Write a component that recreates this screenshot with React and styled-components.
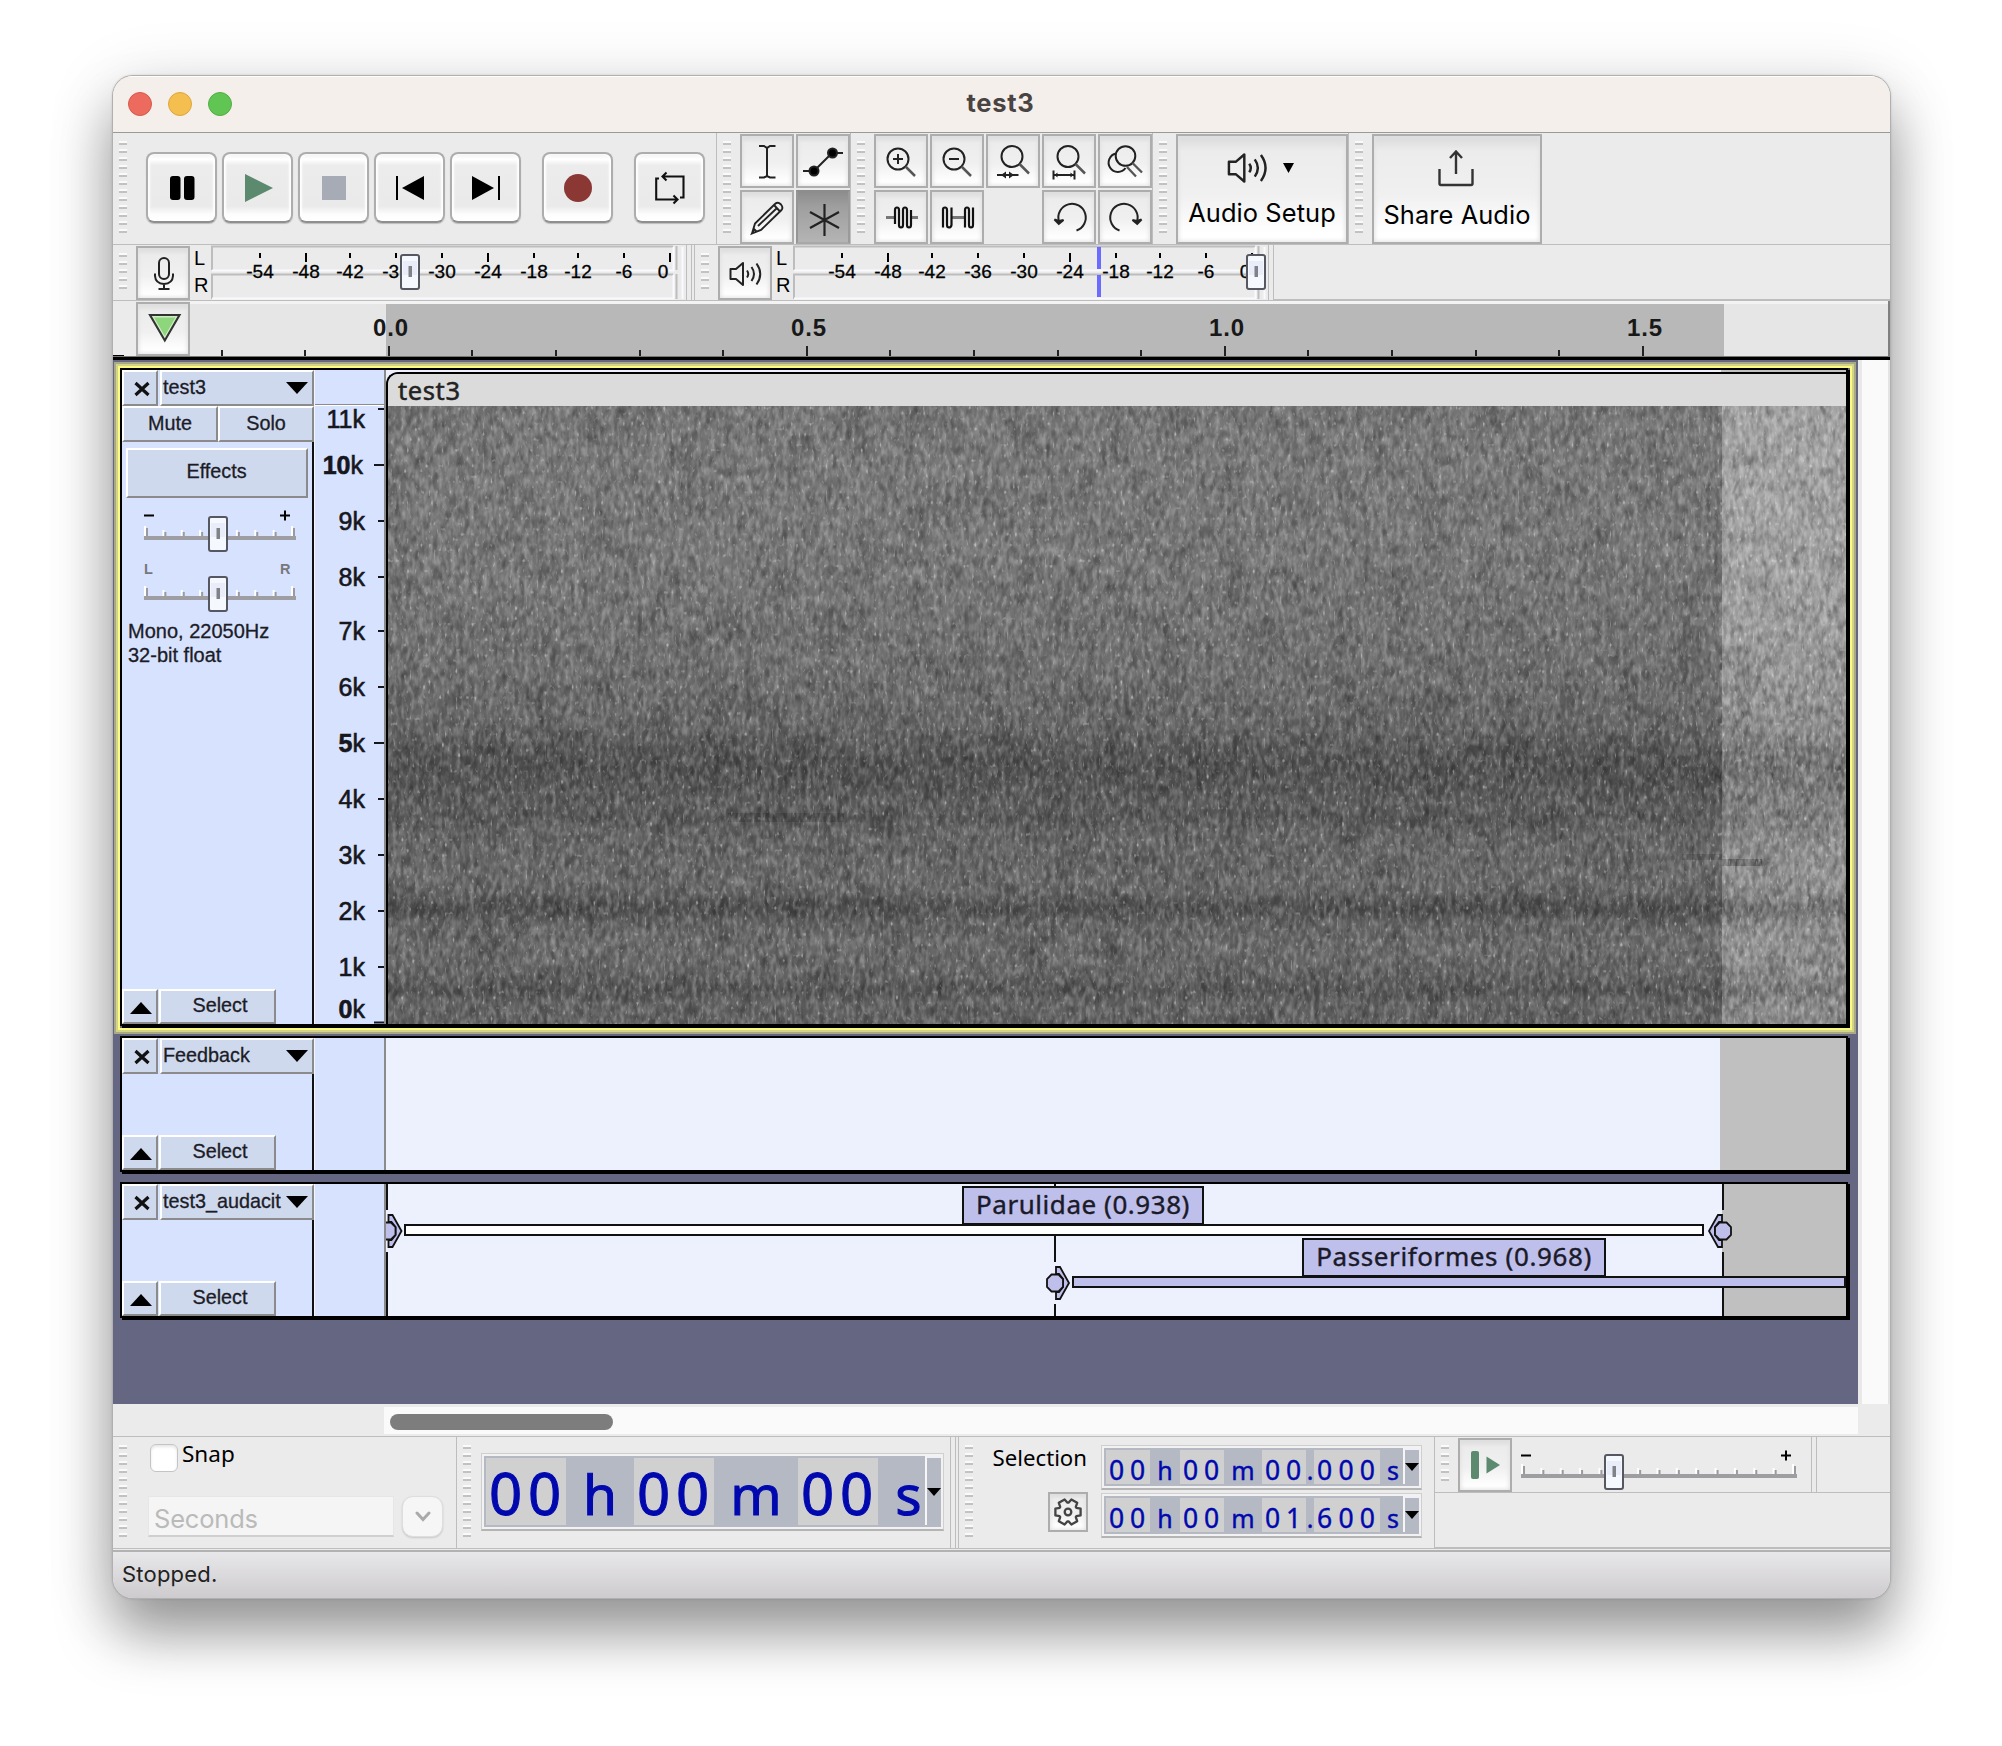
import React from "react";
import styled, { createGlobalStyle, css } from "styled-components";

const lucida = `"Noto Sans", "Open Sans", sans-serif`;
const system = `Inter, Roboto, sans-serif`;
const helvetica = `"Liberation Sans", Arial, sans-serif`;

const Global = createGlobalStyle`
  * { box-sizing: border-box; }
  html, body { margin: 0; background: #fff; }
  svg { display: block; flex: none; }
`;

const Desktop = styled.main`
  width: 2002px;
  height: 1746px;
  padding: 76px 112px 0 113px;
  overflow: hidden;
  background: #fff;
  font-family: ${helvetica};
  color: #000;
`;

const AppWindow = styled.section`
  display: flex;
  flex-direction: column;
  width: 1777px;
  height: 1522px;
  overflow: hidden;
  border-radius: 20px;
  background: #ebebeb;
  box-shadow: 0 0 0 1px #b0b0b0, 0 0 3px rgba(0, 0, 0, 0.3), 0 36px 56px rgba(0, 0, 0, 0.36), 0 10px 70px rgba(0, 0, 0, 0.14);
`;

const TitleBar = styled.header`
  display: grid;
  grid-template-columns: 200px 1fr 200px;
  align-items: center;
  height: 57px;
  padding: 0 15px;
  background: #f5efec;
  border-bottom: 1px solid #999;
  box-shadow: inset 0 1px 0 #fff;
`;

const Lights = styled.div`
  display: flex;
  gap: 16px;
`;

const Light = styled.span`
  width: 24px;
  height: 24px;
  border-radius: 50%;
  background: ${(p) => p.$color};
  border: 1px solid ${(p) => p.$edge};
`;

const Title = styled.h1`
  margin: 0;
  padding: 0 2px 4px 0;
  text-align: center;
  font: 700 25.5px ${system};
  letter-spacing: 0.7px;
  color: #494341;
`;

const Row = styled.div`
  display: flex;
  flex: none;
  height: ${(p) => p.$h}px;
  border-bottom: 1px solid #bdbdbd;
`;

const Toolbar = styled.div`
  display: flex;
  align-items: flex-start;
  padding-left: 6px;
  width: ${(p) => (p.$w ? p.$w + "px" : "auto")};
  border-right: ${(p) => (p.$open ? "none" : "1px solid #bdbdbd")};
`;

const Grip = styled.span`
  flex: none;
  width: 8px;
  height: ${(p) => p.$n * 8 - 4}px;
  margin: 8px ${(p) => p.$gap ?? 9}px 0 0;
  background: repeating-linear-gradient(#fafafa 0 2px, #c2c2c2 2px 4px, transparent 4px 8px);
`;

const TransportKeys = styled.div`
  display: flex;
  gap: 5px;
  padding: 19px 10px 0 0;
`;

const BigKey = styled.button`
  display: grid;
  place-items: center;
  width: 71px;
  height: 71px;
  padding: 0;
  margin-left: ${(p) => p.$push || 0}px;
  border: 2px solid #adadad;
  border-bottom-color: #8f8f8f;
  border-radius: 8px;
  background: linear-gradient(#f2f2f2 0, #fff 8%, #ececec 17%, #eaeaea 78%, #fdfdfd 90%, #fff 100%);
  box-shadow: inset 2px 0 2px #fff, inset -2px 0 2px #fff, 0 1px 1px rgba(0, 0, 0, 0.2);
`;

const KeyGrid = styled.div`
  display: grid;
  grid-template-columns: repeat(${(p) => p.$cols}, 54px);
  grid-auto-rows: 54px;
  gap: 2px;
  padding-top: 1px;
`;

const bevel = css`
  border: 2px solid #adadad;
  background: linear-gradient(#d9d9d9 0, #ececec 14%, #f0f0f0 55%, #fff 92%);
  box-shadow: inset 0 0 4px 1px #e2e2e2;
`;

const Key = styled.button`
  display: grid;
  place-items: center;
  flex: none;
  width: 54px;
  height: 54px;
  padding: 0;
  margin-top: ${(p) => p.$top || 0}px;
  ${bevel}
  ${(p) => p.$down && css`
    border-color: #8d8d8d #9a9a9a #a8a8a8 #959595;
    background: linear-gradient(#8d8d8d, #9f9f9f 30%, #b4b4b4);
    box-shadow: none;
  `}
  svg { overflow: visible; }
`;

const WideKey = styled.button`
  display: flex;
  flex-direction: column;
  align-items: center;
  width: ${(p) => p.$w}px;
  height: 110px;
  margin-top: 1px;
  padding: ${(p) => p.$top}px 0 0;
  gap: ${(p) => p.$gap}px;
  ${bevel}
  font: 400 25.4px/30px ${system};
  letter-spacing: 0.1px;
  white-space: nowrap;
  color: #000;
`;

const IconLine = styled.span`
  display: flex;
  align-items: center;
  gap: 14px;
  padding-right: 4px;
`;

const ChannelNames = styled.div`
  display: flex;
  flex-direction: column;
  width: 17px;
  margin-left: 4px;
  font-size: 20px;
  line-height: 27px;
`;

const Resizer = styled.span`
  width: 6px;
  height: ${(p) => p.$h || 55}px;
  margin-left: 2px;
  border: solid #bdbdbd;
  border-width: 0 1px;
`;

const MeterRest = styled.div`
  flex: 1;
  border-bottom: 1px solid #bdbdbd;
`;

const TimelineRow = styled.div`
  display: flex;
  flex: none;
  height: 59px;
  padding-left: 23px;
  background: linear-gradient(#000, #000) 0 54px / 11px 1px no-repeat, linear-gradient(transparent 55px, #777 55px, #777 56px, #000 56px), #ebebeb;
`;

const Workspace = styled.div`
  display: flex;
  flex: none;
  height: 1044px;
`;

const TrackList = styled.div`
  display: flex;
  flex-direction: column;
  gap: 8px;
  width: 1745px;
  padding: 8px 8px 0 7px;
  background: #646682;
`;

const VScroll = styled.div`
  flex: 1;
  background: #fafafa;
  border-left: 4px solid #e9e9e9;
  border-right: 2px solid #e4e4e4;
`;

const TrackShell = styled.div`
  width: 1730px;
  height: ${(p) => p.$h + 2}px;
  padding: 0 2px 2px 0;
  ${(p) => p.$focus && css`
    box-shadow: 0 0 0 2px #fbfb82, 0 0 0 4px #d3d38a, 0 0 0 6px #a9aa84;
  `}
`;

const TrackBox = styled.article`
  display: flex;
  height: 100%;
  border: 2px solid #000;
  box-shadow: 2px 2px 0 #000;
  background: #d7e2ff;
`;

const Panel = styled.div`
  display: flex;
  flex-direction: column;
  flex: none;
  width: 192px;
`;

const PanelBody = styled.div`
  display: flex;
  flex-direction: column;
  flex: 1;
  border-right: 2px solid #111;
`;

const Split = styled.div`
  display: flex;
  flex: none;
  gap: ${(p) => p.$gap || 0}px;
  height: 36px;
`;

const PanelKey = styled.button`
  display: flex;
  align-items: center;
  justify-content: ${(p) => (p.$left ? "space-between" : "center")};
  width: ${(p) => p.$w}px;
  height: ${(p) => p.$h || 36}px;
  margin: ${(p) => p.$m || 0};
  padding: ${(p) => p.$pad || "0"};
  border: 2px solid;
  border-color: #fff #8b8b8b #8b8b8b #fff;
  background: #cfd9ee;
  font: 400 19.8px/22px ${helvetica};
  -webkit-text-stroke: 0.3px #1c1c26;
  color: #1c1c26;
  white-space: nowrap;
`;

const NameText = styled.span`
  padding-bottom: ${(p) => p.$lift ?? 3}px;
`;

const SliderBlock = styled.div`
  margin: ${(p) => p.$m};
  svg { overflow: visible; }
`;

const TrackInfo = styled.p`
  margin: 7px 0 0 6px;
  font-size: 20px;
  line-height: 24px;
  -webkit-text-stroke: 0.3px #1c1c26;
  color: #1c1c26;
`;

const PanelFoot = styled.div`
  display: flex;
  margin-top: auto;
`;

const VRuler = styled.div`
  flex: none;
  width: 72px;
  border-left: 1px solid #f4f6ff;
  border-right: 2px solid #8b8b8b;
`;

const Lane = styled.div`
  position: relative;
  width: 1460px;
  background: linear-gradient(90deg, #edf1fe ${(p) => p.$cut}px, #c0c0c0 ${(p) => p.$cut}px);
`;

const Clip = styled.div`
  margin-top: 2px;
  border: solid #000;
  border-width: 2px 0 0 2px;
  border-top-left-radius: 12px;
  overflow: hidden;
`;

const ClipHeader = styled.div`
  height: 32px;
  padding-left: 10px;
  background: #dbdbdb;
  font: 400 25.5px/32px ${lucida};
  letter-spacing: 0.6px;
  -webkit-text-stroke: 0.5px #222;
  color: #222;
`;

const LabelTag = styled.span`
  position: absolute;
  left: ${(p) => p.$x}px;
  top: ${(p) => p.$y}px;
  width: ${(p) => p.$w}px;
  height: 39px;
  border: 2px solid #111;
  background: #bfbfec;
  text-align: center;
  font: 400 26px/32px ${lucida};
  letter-spacing: ${(p) => p.$ls}px;
  -webkit-text-stroke: 0.4px #1a1a28;
  white-space: nowrap;
  color: #1a1a28;
`;

const HScrollRow = styled.div`
  flex: none;
  height: 33px;
  padding: 3px 32px 2px 271px;
  background: #ebebeb;
  border-bottom: 1px solid #bdbdbd;
`;

const HScroll = styled.div`
  height: 27px;
  padding: 7px 6px;
  background: #fafafa;
`;

const HThumb = styled.div`
  width: 223px;
  height: 16px;
  border-radius: 8px;
  background: #7d7d7d;
`;

const SnapBox = styled.div`
  display: flex;
  flex-direction: column;
  gap: 20px;
  padding: 7px 0 0 21px;
`;

const SnapCheck = styled.label`
  display: flex;
  gap: 4px;
  padding-left: 2px;
  height: 32px;
  font: 400 22.5px/19px ${lucida};
`;

const Check = styled.span`
  width: 28px;
  height: 28px;
  border: 1px solid #c4c4c4;
  border-radius: 6px;
  background: #fff;
  box-shadow: inset 0 2px 3px rgba(0, 0, 0, 0.1);
`;

const Combo = styled.div`
  display: flex;
  gap: 8px;
`;

const ComboField = styled.div`
  width: 246px;
  height: 41px;
  padding-left: 5px;
  background: #f5f5f5;
  border: 1px solid #e6e6e6;
  border-bottom: 2px solid #cfcfcf;
  font: 400 25.5px/44px ${system};
  letter-spacing: -0.2px;
  color: #bababa;
`;

const ComboKey = styled.span`
  display: grid;
  place-items: center;
  width: 41px;
  height: 41px;
  border-radius: 11px;
  border: 1px solid #dedede;
  background: #f6f6f6;
  box-shadow: 0 1px 2px rgba(0, 0, 0, 0.15);
`;

const TimeFrame = styled.div`
  display: flex;
  width: ${(p) => p.$w}px;
  height: ${(p) => p.$h}px;
  padding: 2px;
  border: 1px solid #cfcfcf;
  border-bottom: 2px solid #b4b4b4;
  background: #f2f2f2;
`;

const TimeInner = styled.div`
  display: flex;
  flex: 1;
  padding: 2px 0 2px 2px;
  background: #b5b9c4;
  font-family: ${lucida};
  -webkit-text-stroke: ${(p) => p.$stroke}px #0008ae;
  color: #0008ae;
`;

const Digits = styled.span`
  display: grid;
  grid-template-columns: repeat(${(p) => p.$n}, 1fr);
  width: ${(p) => p.$w}px;
  padding-right: 2px;
  background: #d0d0d0;
  text-align: center;
  font-size: ${(p) => p.$size}px;
  line-height: ${(p) => p.$lh}px;
`;

const Digit = styled.span`
  height: 0;
`;

const Unit = styled.span`
  flex: none;
  width: ${(p) => p.$w}px;
  height: 0;
  padding-left: ${(p) => p.$pad || 0}px;
  text-align: center;
  font-size: ${(p) => p.$size}px;
  line-height: ${(p) => p.$lh}px;
`;

const DropKey = styled.span`
  display: grid;
  place-items: center;
  flex: none;
  width: 16px;
  margin-top: -2px;
  margin-left: auto;
  border-left: 2px solid #f6f6f6;
  border-top: 2px solid #f0f0f6;
`;

const TimeWrap = styled.div`
  padding: 16px 4px 0 10px;
`;

const SelectionLead = styled.div`
  display: flex;
  flex-direction: column;
  align-items: flex-end;
  width: 97px;
  margin-right: 13px;
  padding-top: 8px;
  gap: 21px;
  font: 400 22.2px/26px ${lucida};
`;

const SelectionWord = styled.span`
  margin-right: 1px;
`;

const GearKey = styled.button`
  display: grid;
  place-items: center;
  width: 40px;
  height: 40px;
  padding: 0;
  ${bevel}
`;

const TimeStack = styled.div`
  display: flex;
  flex-direction: column;
  gap: 3px;
  padding-top: 8px;
`;

const SpeedArea = styled.div`
  flex: 1;
  height: 111px;
  border-bottom: 1px solid #bdbdbd;
`;

const SpeedBar = styled.div`
  display: flex;
  height: 56px;
  padding-left: 6px;
  border-bottom: 1px solid #bdbdbd;
`;

const StatusBar = styled.footer`
  flex: 1;
  margin-top: 1px;
  padding: 7px 0 0 9px;
  border-top: 2px solid #b2b2b2;
  background: linear-gradient(#e8e7e9, #cdcbce);
  font: 400 22px/30px ${system};
  letter-spacing: 0.2px;
  color: #222;
`;

/* ---------- icons ---------- */

const Pause = () => (
  <svg width="26" height="26"><rect x="1" y="1" width="10.5" height="24" rx="3" /><rect x="15" y="1" width="10.5" height="24" rx="3" /></svg>
);
const Play = () => (
  <svg width="30" height="30"><path d="M2 1L30 15L2 29Z" fill="#5b8a6f" /></svg>
);
const Stop = () => (
  <svg width="26" height="26"><rect x="1" y="1" width="24" height="24" fill="#a7abb5" /></svg>
);
const Prev = () => (
  <svg width="30" height="26"><rect x="1" y="1" width="2" height="24" /><path d="M29 1V25L7 13Z" /></svg>
);
const Next = () => (
  <svg width="30" height="26"><rect x="27" y="1" width="2" height="24" /><path d="M1 1V25L23 13Z" /></svg>
);
const Rec = () => (
  <svg width="30" height="30"><circle cx="15" cy="15" r="14" fill="#8b3835" /></svg>
);
const Loop = () => (
  <svg width="32" height="34" fill="none" stroke="#111" strokeWidth="2.1">
    <path d="M9 5.5H29.500V26.500H26M12.500 1.500L8.500 5.500L12.500 9.500M5 7.500H2.200V28.500H23M19.500 24.500L23.500 28.500L19.500 32.500" />
  </svg>
);

const stroke = { fill: "none", stroke: "#222", strokeWidth: 2 };

const Glyph = ({ dx = 0, dy = 0, children }) => (
  <svg width="40" height="40" viewBox={`${-dx} ${-dy} 40 40`} {...stroke}>{children}</svg>
);

const IBeam = () => (
  <Glyph dy={1}><path d="M20 4.500V35M12 4H17L20 6L23 4H28.500M12 35.500H17L20 34L23 35.500H28.500" /></Glyph>
);
const Envelope = () => (
  <Glyph dx={-1} dy={1}>
    <path d="M1 29H12L30 11H41" fill="none" />
    <circle cx="12" cy="29" r="4.500" fill="#000" /><circle cx="30.500" cy="11" r="4.500" fill="#000" />
  </Glyph>
);
const Pencil = () => (
  <Glyph dy={1}>
    <path d="M5 35.500L8 25.500L28.500 5.500Q31 3.500 34 6.500Q36.500 9.500 34.500 12L14 32Z M27 7L33 13.500M11 28L30 10M5 35.500L7 31L9.500 33.500Z" strokeWidth="1.900" />
  </Glyph>
);
const Star = () => (
  <Glyph dx={1} dy={2}><path d="M20.500 5V37M6 13L35 29M35 13L6 29" strokeWidth="2.200" /></Glyph>
);
const ZoomIn = () => (
  <Glyph dx={2} dy={3}><circle cx="15" cy="15" r="10.500" /><path d="M10 15H20M15 10V20" /><path d="M22.500 22.500L32 32" stroke="#555" strokeWidth="2.500" /></Glyph>
);
const ZoomOut = () => (
  <Glyph dx={2} dy={3}><circle cx="15" cy="15" r="10.500" /><path d="M10 15H20" /><path d="M22.500 22.500L32 32" stroke="#555" strokeWidth="2.500" /></Glyph>
);
const ZoomSel = () => (
  <Glyph dx={2} dy={2}>
    <circle cx="17" cy="13.500" r="10.500" /><path d="M24.500 21L34 30.500" stroke="#555" strokeWidth="2.500" />
    <path d="M2 32H23.500" /><path d="M11 28.500V35.500L6 32ZM14 28.500V35.500L19 32Z" fill="#222" stroke="none" />
  </Glyph>
);
const ZoomFit = () => (
  <Glyph dx={2} dy={2}>
    <circle cx="17" cy="13.500" r="10.500" /><path d="M24.500 21L34 30.500" stroke="#555" strokeWidth="2.500" />
    <path d="M2.500 32H23.500M2.500 27.500V36.500M23.500 27.500V36.500" /><path d="M6.500 29.500V34.500L3.500 32ZM19.500 29.500V34.500L22.500 32Z" fill="#222" stroke="none" />
  </Glyph>
);
const ZoomToggle = () => (
  <Glyph dx={2} dy={2}>
    <circle cx="18.500" cy="13" r="9.800" /><path d="M25.500 20L35 29.500M20 24L29 33.500" stroke="#555" strokeWidth="2.300" />
    <path d="M9 10.500A9.300 9.300 0 1 0 18.500 25" />
  </Glyph>
);
const Trim = () => (
  <Glyph>
    <path d="M5 20.500H13M31 20.500H37" stroke="#777" strokeWidth="3" />
    <path d="M14 27V13Q14 10.500 16 10.500T18 13V28Q18 30.500 20 30.500T22 28V13Q22 10.500 24 10.500T26 13V28Q26 30.500 28 30.500T30 28V13" stroke="#111" strokeWidth="2.200" />
  </Glyph>
);
const Silence = () => (
  <Glyph>
    <path d="M15 20.500H28" stroke="#777" strokeWidth="3" />
    <path d="M6 30.500V12.500Q6 10.500 8 10.500T10 13V28Q10 30.500 12 30.500T14.500 28V10.500M28 30.500V13Q28 10.500 30 10.500T32 13V28Q32 30.500 34 30.500T36 28V10.500" stroke="#111" strokeWidth="2.200" />
  </Glyph>
);
const Undo = () => (
  <Glyph><path d="M27.500 33.500A13.700 13.700 0 1 0 9.800 24" /><path d="M5.500 22.500L9.800 27L14.500 23L10 24Z" fill="#222" strokeWidth="2" /></Glyph>
);
const Redo = () => (
  <Glyph><path d="M14.500 33.500A13.700 13.700 0 1 1 32.200 24" /><path d="M36.500 22.500L32.200 27L27.500 23L32 24Z" fill="#222" strokeWidth="2" /></Glyph>
);
const Mic = () => (
  <svg width="24" height="36" viewBox="-1 -1 24 36" {...stroke}>
    <rect x="7" y="2" width="10" height="21" rx="5" /><path d="M3 17.500V20Q3.500 27.500 12 28Q20.500 27.500 21 20V17.500M12 28V32M6.500 33H17.500" />
  </svg>
);
const Speaker = ({ w = 34, h = 26, dx = 1 }) => (
  <svg width={w} height={h} viewBox={`${-dx} ${-dx} 34 26`} {...stroke}>
    <path d="M1.500 8H7L14 2V24L7 18H1.500Z" strokeLinejoin="round" />
    <path d="M18 9.500Q20.500 13 18 16.500M22.500 6Q27.500 13 22.500 20M27.500 2.500Q35 13 27.500 23.500" />
  </svg>
);
const Share = () => (
  <svg width="38" height="38" viewBox="1 0 38 38" fill="none" stroke="#333" strokeWidth="2.400">
    <path d="M2.500 20V34.500Q2.500 36 4 36H34Q35.500 36 35.500 34.500V20M19 25V3M13 9L19 2.500L25 9" />
  </svg>
);
const Down = ({ w = 14, h = 8 }) => (
  <svg width={w} height={h}><path d={`M0 0H${w}L${w / 2} ${h}Z`} /></svg>
);
const Up = () => (
  <svg width="22" height="12"><path d="M0 12H22L11 0Z" /></svg>
);
const Cross = () => (
  <svg width="18" height="16" stroke="#111" strokeWidth="3.200"><path d="M2.500 2L15.500 14M15.500 2L2.500 14" /></svg>
);

const gearPath = Array.from({ length: 6 }, (_, i) =>
  [[-27, 9.3], [-15, 13], [15, 13], [27, 9.3]].map(([a, r]) => {
    const t = ((i * 60 + a) * Math.PI) / 180;
    return `${(15 + r * Math.cos(t)).toFixed(1)} ${(15 + r * Math.sin(t)).toFixed(1)}`;
  }).join("L")
).join("L");

const Gear = () => (
  <svg width="30" height="30" viewBox="0 0 30 30" fill="none" stroke="#444" strokeWidth="2.300" strokeLinejoin="round">
    <circle cx="15" cy="15" r="3.300" />
    <path d={`M${gearPath}Z`} />
  </svg>
);
const GreenPin = () => (
  <svg width="34" height="30" viewBox="-1 1 34 30"><path d="M4.500 3H31L17.800 26Z" fill="#8ed67c" stroke="#cdeec3" strokeWidth="3" /><path d="M3 2H32.500L17.800 27.500Z" fill="none" stroke="#333" strokeWidth="2.100" /></svg>
);
const PlaySpeed = () => (
  <svg width="32" height="30" fill="#5b8a6f"><rect x="2" y="1" width="8" height="28" rx="2" /><path d="M17.500 6.500L31 15L17.500 23.500Z" /></svg>
);

const Thumb = ({ x, y }) => (
  <g>
    <rect x={x + 1} y={y + 1} width="18" height="34" rx="2" fill="#f6f8ff" stroke="#555761" strokeWidth="2" />
    <rect x={x + 3} y={y + 7} width="14" height="14" fill="#e9edfa" />
    <rect x={x + 8.500} y={y + 12} width="3.500" height="11" fill="#808288" />
  </g>
);

const Slider = ({ width, marks, thumb, left, right, small, drop = 0 }) => {
  const step = (width - 5) / (marks - 1);
  return (
    <svg width={width} height="42">
      {small ? (
        <g fontFamily="Liberation Sans" fontSize="14.500" fontWeight="700" fill="#77777d">
          <text x="0" y="4">{left}</text><text x={width - 16} y="4">{right}</text>
        </g>
      ) : (
        <path d={`M0 5.500H10M${width - 16} 5.500h10M${width - 11} 0.500v10`} stroke="#000" strokeWidth="2" />
      )}
      <g transform={`translate(0 ${drop})`}>
        {Array.from({ length: marks }, (_, i) => {
          const end = i === 0 || i === marks - 1;
          const x = i * step;
          return (
            <g key={i}>
              <rect x={x} y={end ? 14 : 18} width="2" height={end ? 10 : 6} fill="#fff" />
              <rect x={x + 2} y={end ? 16 : 20} width="2" height={end ? 9 : 5} fill="#9a9aa0" />
            </g>
          );
        })}
        <rect x="0" y="24" width={width} height="4" fill="#9e9ea2" />
        <Thumb x={thumb} y={4} />
      </g>
    </svg>
  );
};

const meterTicks = [
  [49, "-54"], [95, "-48", 1], [139, "-42"], [185, "-36"], [231, "-30"],
  [277, "-24", 1], [323, "-18"], [367, "-12"], [413, "-6"], [459, "0", 1],
];

const Meter = ({ thumb, peak }) => (
  <svg width="473" height="55">
    <path d="M1 25V1.500H462M1 54V29.500H462M465.500 1V25M465.500 29V54" fill="none" stroke="#bdbdbd" strokeWidth="2" />
    <path d="M1 25.500H462.500V2M1 53.500H462.500V30M471.500 2V54" fill="none" stroke="#fafafe" strokeWidth="2" />
    {meterTicks.map(([x, t, long]) => (
      <g key={t}>
        <rect x={x - 1} y="8" width="2" height={long ? 9 : 5} />
        <text x={t === "0" ? 452 : x} y="32.500" textAnchor="middle" fontFamily="Liberation Sans" fontSize="19" stroke="#000" strokeWidth="0.300">{t}</text>
      </g>
    ))}
    {peak && <path d={`M${peak} 2V24M${peak} 30V52`} stroke="#6b6bff" strokeWidth="4" />}
    <Thumb x={thumb} y={9} />
  </svg>
);

const TimeRuler = () => (
  <svg width="1700" height="59">
    <rect width="1700" height="59" fill="#e6e6e6" />
    <rect width="1700" height="3" fill="#f3f3f3" />
    <rect x="196" y="3" width="1338" height="52" fill="#b8b8b8" />
    {Array.from({ length: 18 }, (_, i) => {
      const major = (i - 2) % 5 === 0;
      const x = 31.500 + i * 83.600;
      return <rect key={i} x={Math.round(x) - 1} y={major ? 45 : 49} width="2" height={major ? 10 : 6} fill="#222" />;
    })}
    {["0.0", "0.5", "1.0", "1.5"].map((t, i) => (
      <text key={t} x={201 + i * 418} y="34.500" textAnchor="middle" fontFamily="Liberation Sans" fontWeight="700" fontSize="24" letterSpacing="0.8" fill="#181818">{t}</text>
    ))}
    <rect y="55" width="1700" height="1" fill="#777" />
    <rect y="56" width="1700" height="3" fill="#000" />
    <rect x="1698" width="2" height="56" fill="#808080" />
  </svg>
);

const freqs = [
  ["11", 49, 39, 0], ["10", 95, 95, 1], ["9", 151, 151, 0], ["8", 207, 207, 0], ["7", 261, 261, 0], ["6", 317, 317, 0],
  ["5", 373, 373, 1], ["4", 429, 429, 0], ["3", 485, 485, 0], ["2", 541, 541, 0], ["1", 597, 597, 0], ["0", 639, 652.5, 1],
];

const FreqScale = () => (
  <svg width="69" height="654">
    <rect y="34" width="69" height="1" fill="#8b8b8b" /><rect y="35" width="69" height="1" fill="#fff" />
    {freqs.map(([n, ty, my, big]) => (
      <g key={n} fill="#16161c">
        <text x={n === "10" ? 48 : 50} y={ty + 8.500} textAnchor="end" fontFamily="Liberation Sans" fontSize="25" stroke="#16161c" strokeWidth="0.600">
          <tspan fontWeight={big ? 700 : 400}>{n}</tspan>k
        </text>
        <rect x={big ? 59 : 63} y={my - 1} width="12" height="2" />
      </g>
    ))}
  </svg>
);

const bands = [
  [0, 120], [0.08, 122], [0.25, 121], [0.42, 112], [0.52, 102], [0.555, 88], [0.585, 80], [0.62, 86], [0.645, 94], [0.665, 86],
  [0.69, 100], [0.77, 106], [0.79, 98], [0.805, 80], [0.82, 80], [0.835, 98], [0.87, 108], [0.92, 100], [0.947, 84], [0.965, 100], [1, 96],
];

const grey = (v) => `rgb(${v},${v},${v})`;

const NoiseFilter = ({ id, freq, octaves, seed, tone, gain, bias }) => (
  <filter id={id} x="0" y="0" width="100%" height="100%" colorInterpolationFilters="sRGB">
    <feTurbulence type="fractalNoise" baseFrequency={freq} numOctaves={octaves} seed={seed} />
    <feColorMatrix values={`0 0 0 0 ${tone}  0 0 0 0 ${tone}  0 0 0 0 ${tone}  ${gain} 0 0 0 ${bias}`} />
  </filter>
);

const Spectrogram = () => (
  <svg width="1458" height="618">
    <defs>
      <linearGradient id="sel" x2="0" y2="1">{bands.map(([o, v]) => <stop key={o} offset={o} stopColor={grey(v - 2)} />)}</linearGradient>
      <linearGradient id="un" x2="0" y2="1">{bands.map(([o, v]) => <stop key={o} offset={o} stopColor={grey(Math.round(v * 1.3))} />)}</linearGradient>
      <NoiseFilter id="light" freq="0.22 0.1" octaves="2" seed="4" tone="1" gain="0.6" bias="-0.24" />
      <NoiseFilter id="dark" freq="0.16 0.08" octaves="2" seed="11" tone="0" gain="0.6" bias="-0.25" />
      <NoiseFilter id="cloud" freq="0.035 0.025" octaves="2" seed="7" tone="0" gain="0.45" bias="-0.2" />
      <NoiseFilter id="dots" freq="0.37 0.19" octaves="1" seed="23" tone="1" gain="2.2" bias="-1.42" />
    </defs>
    <rect width="1335" height="618" fill="url(#sel)" />
    <rect x="1334" width="124" height="618" fill="url(#un)" />
    <rect x="1334" y="453" width="40" height="7" fill="#000" opacity="0.300" />
    <rect x="1294" y="448" width="40" height="6" fill="#000" opacity="0.150" />
    <rect x="340" y="407" width="116" height="9" fill="#000" opacity="0.150" />
    <rect width="1458" height="618" filter="url(#cloud)" />
    <rect width="1458" height="618" filter="url(#dark)" />
    <rect width="1458" height="618" filter="url(#light)" />
    <rect width="1458" height="618" filter="url(#dots)" />
    <svg x="1334" width="124" height="618"><rect width="124" height="618" filter="url(#light)" /></svg>
  </svg>
);

const Handle = ({ x, y, flip }) => (
  <g transform={`translate(${x} ${y}) scale(${flip ? -1 : 1} 1)`} fill="#bfbfec" stroke="#111" strokeWidth="1.800">
    <path d="M1 -16H5L14 0L5 16H1V9H4L8 4V-4L4 -9H1Z" />
    <path d="M-3.500 -8.500H3.500L8 -4V4L3.500 8.500H-3.500L-8 4V-4Z" />
  </g>
);

const LabelDrawing = () => (
  <svg width="1460" height="132">
    <g fill="#111">
      <rect x="0" width="2" height="26" /><rect x="0" y="68" width="2" height="64" />
      <rect x="668" width="2" height="3" /><rect x="668" y="52" width="2" height="26" /><rect x="668" y="120" width="2" height="12" />
      <rect x="1336" width="2" height="26" /><rect x="1336" y="68" width="2" height="64" />
    </g>
    <rect x="19" y="41" width="1298" height="10" fill="#fff" stroke="#111" strokeWidth="2" />
    <rect x="687" y="93" width="772" height="10" fill="#bfbfec" stroke="#111" strokeWidth="2" />
    <Handle x={1.5} y={47} />
    <Handle x={1337} y={47} flip />
    <Handle x={669} y={99} />
  </svg>
);

const TrackHead = ({ name }) => (
  <Split $gap={2}>
    <PanelKey $w={36} $pad="2px 0 0 3px"><Cross /></PanelKey>
    <PanelKey $w={154} $left $pad="0 4px 0 1px"><NameText $lift={2}>{name}</NameText><Down w={22} h={12} /></PanelKey>
  </Split>
);

const TrackFoot = () => (
  <PanelFoot>
    <PanelKey $w={36} $h={35} $pad="3px 0 0 2px"><Up /></PanelKey>
    <PanelKey $w={117} $h={35} $m="0 0 0 1px" $pad="0 0 0 5px"><NameText>Select</NameText></PanelKey>
  </PanelFoot>
);

const DigitCells = ({ text, ...box }) => (
  <Digits $n={text.length} {...box}>
    {[...text].map((d, i) => <Digit key={i}>{d}</Digit>)}
  </Digits>
);

const big = { $size: 58, $lh: 70 };
const bigUnit = { $size: 55, $lh: 72 };
const small = { $size: 26.5, $lh: 41 };
const smallUnit = { $size: 25, $lh: 41 };

const SmallTime = ({ secs, frac }) => (
  <TimeFrame $w={321} $h={45}>
    <TimeInner $stroke={0.4}>
      <DigitCells text="00" $w={44} {...small} />
      <Unit $w={30} {...smallUnit}>h</Unit>
      <DigitCells text="00" $w={44} {...small} />
      <Unit $w={38} {...smallUnit}>m</Unit>
      <DigitCells text={secs} $w={44} {...small} />
      <Unit $w={8} {...smallUnit}>.</Unit>
      <DigitCells text={frac} $w={66} {...small} />
      <Unit $w={22} $pad={4} {...smallUnit}>s</Unit>
      <DropKey><Down /></DropKey>
    </TimeInner>
  </TimeFrame>
);

export default function App() {
  return (
    <Desktop>
      <Global />
      <AppWindow>
        <TitleBar>
          <Lights>
            <Light $color="#ed6a5e" $edge="#d8574c" />
            <Light $color="#f5bf4f" $edge="#dca63c" />
            <Light $color="#61c554" $edge="#52ad43" />
          </Lights>
          <Title>test3</Title>
        </TitleBar>

        <Row $h={112}>
          <Toolbar $w={604}>
            <Grip $n={12} $gap={19} />
            <TransportKeys>
              <BigKey><Pause /></BigKey>
              <BigKey><Play /></BigKey>
              <BigKey><Stop /></BigKey>
              <BigKey><Prev /></BigKey>
              <BigKey><Next /></BigKey>
              <BigKey $push={16}><Rec /></BigKey>
              <BigKey $push={16}><Loop /></BigKey>
            </TransportKeys>
          </Toolbar>
          <Toolbar>
            <Grip $n={12} />
            <KeyGrid $cols={2}>
              <Key><IBeam /></Key>
              <Key><Envelope /></Key>
              <Key><Pencil /></Key>
              <Key $down><Star /></Key>
            </KeyGrid>
          </Toolbar>
          <Toolbar>
            <Grip $n={12} />
            <KeyGrid $cols={5}>
              <Key><ZoomIn /></Key>
              <Key><ZoomOut /></Key>
              <Key><ZoomSel /></Key>
              <Key><ZoomFit /></Key>
              <Key><ZoomToggle /></Key>
              <Key><Trim /></Key>
              <Key><Silence /></Key>
              <span />
              <Key><Undo /></Key>
              <Key><Redo /></Key>
            </KeyGrid>
          </Toolbar>
          <Toolbar>
            <Grip $n={12} />
            <WideKey $w={172} $top={16} $gap={14}>
              <IconLine><Speaker w={42} h={32} dx={0} /><Down w={11} h={10} /></IconLine>
              Audio Setup
            </WideKey>
          </Toolbar>
          <Toolbar $open>
            <Grip $n={12} />
            <WideKey $w={170} $top={13} $gap={13}>
              <Share />
              Share Audio
            </WideKey>
          </Toolbar>
        </Row>

        <Row $h={56}>
          <Toolbar $w={582}>
            <Grip $n={5} />
            <Key $top={1}><Mic /></Key>
            <ChannelNames><span>L</span><span>R</span></ChannelNames>
            <Meter thumb={189} />
            <Resizer />
          </Toolbar>
          <Toolbar $open>
            <Grip $n={5} />
            <Key $top={1}><Speaker /></Key>
            <ChannelNames><span>L</span><span>R</span></ChannelNames>
            <Meter thumb={453} peak={306} />
            <Resizer />
          </Toolbar>
          <MeterRest />
        </Row>

        <TimelineRow>
          <Key $top={1}><GreenPin /></Key>
          <TimeRuler />
        </TimelineRow>

        <Workspace>
          <TrackList>
            <TrackShell $h={658} $focus>
              <TrackBox>
                <Panel>
                  <TrackHead name="test3" />
                  <Split>
                    <PanelKey $w={96}><NameText $lift={2}>Mute</NameText></PanelKey>
                    <PanelKey $w={96}><NameText $lift={2}>Solo</NameText></PanelKey>
                  </Split>
                  <PanelBody>
                    <PanelKey $w={182} $h={50} $m="6px 0 0 4px" $pad="0 1px 0 0"><NameText $lift={5}>Effects</NameText></PanelKey>
                    <SliderBlock $m="12px 0 0 22px"><Slider width={152} marks={9} thumb={64} drop={2} /></SliderBlock>
                    <SliderBlock $m="18px 0 0 22px"><Slider width={152} marks={9} thumb={64} left="L" right="R" small drop={2} /></SliderBlock>
                    <TrackInfo>Mono, 22050Hz<br />32-bit float</TrackInfo>
                    <TrackFoot />
                  </PanelBody>
                </Panel>
                <VRuler><FreqScale /></VRuler>
                <Lane $cut={1335}>
                  <Clip>
                    <ClipHeader>test3</ClipHeader>
                    <Spectrogram />
                  </Clip>
                </Lane>
              </TrackBox>
            </TrackShell>

            <TrackShell $h={136}>
              <TrackBox>
                <Panel>
                  <TrackHead name="Feedback" />
                  <PanelBody><TrackFoot /></PanelBody>
                </Panel>
                <VRuler />
                <Lane $cut={1334} />
              </TrackBox>
            </TrackShell>

            <TrackShell $h={136}>
              <TrackBox>
                <Panel>
                  <TrackHead name="test3_audacit" />
                  <PanelBody><TrackFoot /></PanelBody>
                </Panel>
                <VRuler />
                <Lane $cut={1336}>
                  <LabelDrawing />
                  <LabelTag $x={576} $y={2} $w={242} $ls={0.55}>Parulidae (0.938)</LabelTag>
                  <LabelTag $x={916} $y={54} $w={304} $ls={0.6}>Passeriformes (0.968)</LabelTag>
                </Lane>
              </TrackBox>
            </TrackShell>
          </TrackList>
          <VScroll />
        </Workspace>

        <HScrollRow>
          <HScroll><HThumb /></HScroll>
        </HScrollRow>

        <Row $h={112}>
          <Toolbar $w={344}>
            <Grip $n={12} $gap={0} />
            <SnapBox>
              <SnapCheck><Check />Snap</SnapCheck>
              <Combo>
                <ComboField>Seconds</ComboField>
                <ComboKey>
                  <svg width="16" height="11" fill="none" stroke="#aaa" strokeWidth="3" strokeLinecap="round"><path d="M2 2L8 8.500L14 2" /></svg>
                </ComboKey>
              </Combo>
            </SnapBox>
          </Toolbar>
          <Toolbar $w={502}>
            <Grip $n={12} $gap={0} />
            <TimeWrap>
              <TimeFrame $w={463} $h={78}>
                <TimeInner $stroke={1}>
                  <DigitCells text="00" $w={80} {...big} />
                  <Unit $w={68} {...bigUnit}>h</Unit>
                  <DigitCells text="00" $w={80} {...big} />
                  <Unit $w={84} {...bigUnit}>m</Unit>
                  <DigitCells text="00" $w={80} {...big} />
                  <Unit $w={46} $pad={15} {...bigUnit}>s</Unit>
                  <DropKey><Down w={14} h={8} /></DropKey>
                </TimeInner>
              </TimeFrame>
            </TimeWrap>
            <Resizer $h={111} />
          </Toolbar>
          <Toolbar $w={476}>
            <Grip $n={12} $gap={18} />
            <SelectionLead>
              <SelectionWord>Selection</SelectionWord>
              <GearKey><Gear /></GearKey>
            </SelectionLead>
            <TimeStack>
              <SmallTime secs="00" frac="000" />
              <SmallTime secs="01" frac="600" />
            </TimeStack>
          </Toolbar>
          <SpeedArea>
            <SpeedBar>
              <Grip $n={5} />
              <Key $top={1}><PlaySpeed /></Key>
              <SliderBlock $m="13px 0 0 9px"><Slider width={276} marks={15} thumb={83} /></SliderBlock>
              <SliderBlock $m="0 0 0 12px"><Resizer as="div" /></SliderBlock>
            </SpeedBar>
          </SpeedArea>
        </Row>

        <StatusBar>Stopped.</StatusBar>
      </AppWindow>
    </Desktop>
  );
}
